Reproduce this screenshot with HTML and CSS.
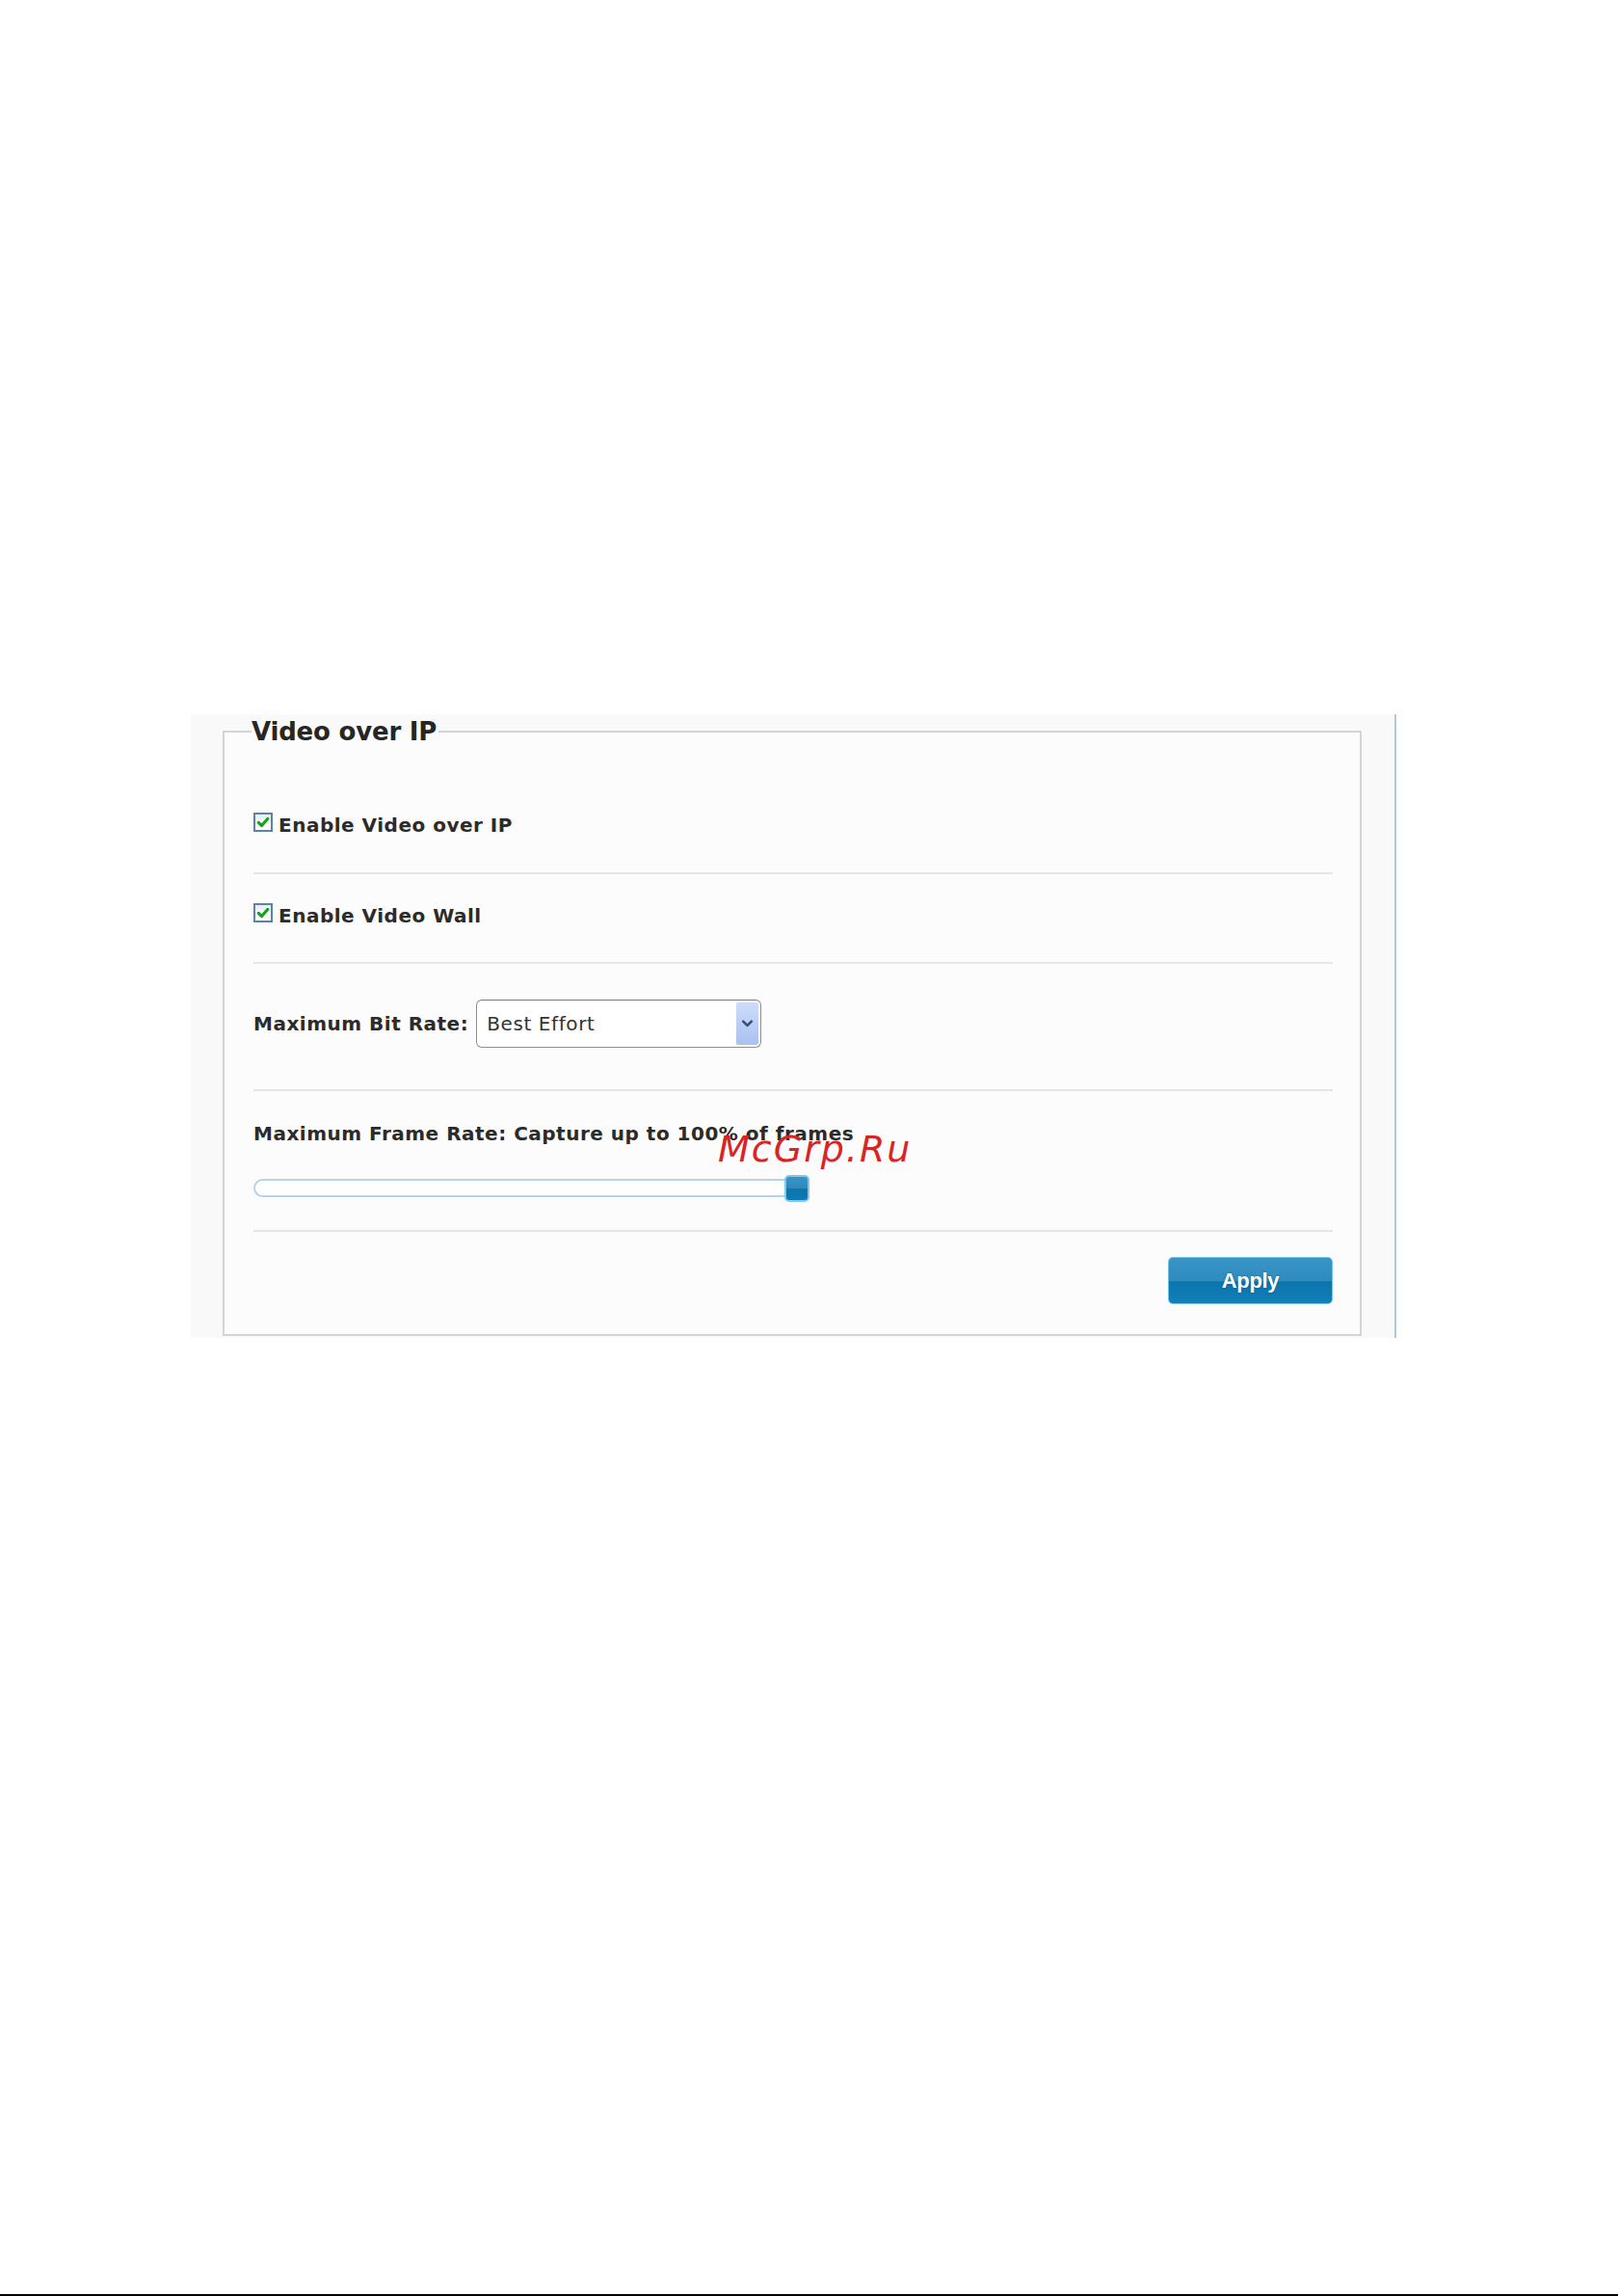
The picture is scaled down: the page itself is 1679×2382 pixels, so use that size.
FILE: index.html
```html
<!DOCTYPE html>
<html>
<head>
<meta charset="utf-8">
<title>Video over IP</title>
<link rel="stylesheet" href="styles.css">
</head>
<body>
<div class="page">
  <div class="shot">
    <fieldset class="panel">
      <legend class="legend">Video over IP</legend>
      <div class="row row-1">
        <span class="cb"><svg viewBox="0 0 16 16" width="16" height="16"><path d="M3.3 8.3 L6.6 11.6 L12.9 4.3" fill="none" stroke="#17a317" stroke-width="3.1" stroke-linecap="round" stroke-linejoin="round"/></svg></span>
        <span class="label cb-label">Enable Video over IP</span>
      </div>
      <div class="row row-2">
        <span class="cb"><svg viewBox="0 0 16 16" width="16" height="16"><path d="M3.3 8.3 L6.6 11.6 L12.9 4.3" fill="none" stroke="#17a317" stroke-width="3.1" stroke-linecap="round" stroke-linejoin="round"/></svg></span>
        <span class="label cb-label">Enable Video Wall</span>
      </div>
      <div class="row row-3">
        <span class="label">Maximum Bit Rate:</span>
        <div class="select">
          <span class="select-text">Best Effort</span>
          <span class="select-btn"><svg viewBox="0 0 24 44" width="23" height="44"><path d="M7.5 19.5 L12 24 L16.5 19.5" fill="none" stroke="#3e4f74" stroke-width="2.8" stroke-linecap="round" stroke-linejoin="round"/></svg></span>
        </div>
      </div>
      <div class="row row-4">
        <span class="label">Maximum Frame Rate: Capture up to 100% of frames</span>
        <div class="slider">
          <div class="track"></div>
          <div class="handle"></div>
        </div>
      </div>
      <div class="row row-5">
        <button class="apply">Apply</button>
      </div>
    </fieldset>
  </div>
  <div class="fill"></div>
  <div class="rule"></div>
  <div class="watermark">McGrp.Ru</div>
</div>
</body>
</html>
```
FILE: styles.css
```css
html, body {
  margin: 0;
  padding: 0;
  background: #ffffff;
}
.page {
  position: relative;
  width: 1679px;
  height: 2382px;
  display: flex;
  flex-direction: column;
  font-family: "DejaVu Sans", Verdana, sans-serif;
}
.shot {
  margin-top: 741px;
  margin-left: 198px;
  width: 1251px;
  box-sizing: border-box;
  padding: 3px 0 2px 33px;
  background: #f9f9f9;
  border-right: 2px solid #a9c9e6;
}
.panel {
  box-sizing: border-box;
  width: 1182px;
  min-width: 0;
  margin: 0;
  padding: 0 28px 0 30px;
  border: 2px solid #d4d4d4;
  background: #fcfcfc;
}
.legend {
  margin-left: -2px;
  padding: 0 2px 0 0;
  font-family: "DejaVu Sans", Verdana, sans-serif;
  font-weight: bold;
  font-size: 26px;
  line-height: 30px;
  letter-spacing: -0.2px;
  color: #262626;
}
.row {
  display: flex;
  border-bottom: 2px solid #e6e6e6;
}
.row-1 {
  align-items: flex-start;
  padding: 69px 0 39px;
}
.row-2 {
  align-items: flex-start;
  padding: 30px 0 38px;
}
.row-3 {
  align-items: center;
  gap: 8px;
  padding: 37px 0 43px;
}
.row-4 {
  flex-direction: column;
  align-items: flex-start;
  padding: 32px 0 29px;
}
.row-5 {
  justify-content: flex-end;
  padding: 26px 0 31px;
  border-bottom: none;
}
.label {
  font-weight: bold;
  font-size: 20px;
  line-height: 24px;
  letter-spacing: 0.5px;
  color: #2b2b2b;
  white-space: nowrap;
}
.cb-label {
  line-height: 20px;
  padding-top: 3px;
  margin-left: 6px;
}
.cb {
  box-sizing: border-box;
  width: 20px;
  height: 20px;
  border: 2px solid #5a82ae;
  background: linear-gradient(#e9eef3, #ffffff);
  display: flex;
  align-items: center;
  justify-content: center;
  flex: none;
}
.select {
  box-sizing: border-box;
  width: 296px;
  height: 50px;
  border: 1px solid #8e8e8e;
  border-top-color: #7a7a7a;
  border-radius: 6px;
  background: #ffffff;
  display: flex;
  align-items: center;
  padding: 0 2px 0 10px;
}
.select-text {
  flex: 1;
  font-size: 20px;
  line-height: 24px;
  letter-spacing: 0.6px;
  color: #333333;
}
.select-btn {
  width: 23px;
  height: 44px;
  border-radius: 2px;
  background: linear-gradient(#cddcfb, #a9c1f1);
  display: flex;
}
.slider {
  position: relative;
  width: 577px;
  height: 28px;
  margin-top: 31px;
}
.track {
  box-sizing: border-box;
  width: 562px;
  height: 19px;
  margin-top: 4px;
  border: 2px solid #b4d3ec;
  border-radius: 10px;
  background: #ffffff;
}
.handle {
  position: absolute;
  right: 0;
  top: 0;
  box-sizing: border-box;
  width: 26px;
  height: 28px;
  border: 2px solid #80c8ee;
  border-radius: 5px;
  background: linear-gradient(#3a93c3 0%, #2f8bbd 48%, #0b75ac 52%, #0f7bb2 100%);
}
.apply {
  box-sizing: border-box;
  width: 171px;
  height: 49px;
  margin: 0;
  padding: 0;
  border: 1px solid #6fc2ec;
  border-radius: 5px;
  background: linear-gradient(#3a95c6 0%, #2e8cbe 50%, #0a74ac 53%, #1480b7 100%);
  color: #ffffff;
  font-family: "Liberation Sans", Arial, sans-serif;
  font-weight: bold;
  font-size: 22px;
  letter-spacing: -0.3px;
  text-shadow: 0 0 2px rgba(0, 40, 70, 0.5);
}
.fill {
  flex: 1;
}
.rule {
  height: 2px;
  background: #000000;
}
.watermark {
  position: absolute;
  left: 745px;
  top: 1173px;
  font-family: "DejaVu Sans", Verdana, sans-serif;
  font-style: oblique;
  font-size: 38px;
  line-height: 38px;
  letter-spacing: 2px;
  color: #d92424;
  white-space: nowrap;
}
```
